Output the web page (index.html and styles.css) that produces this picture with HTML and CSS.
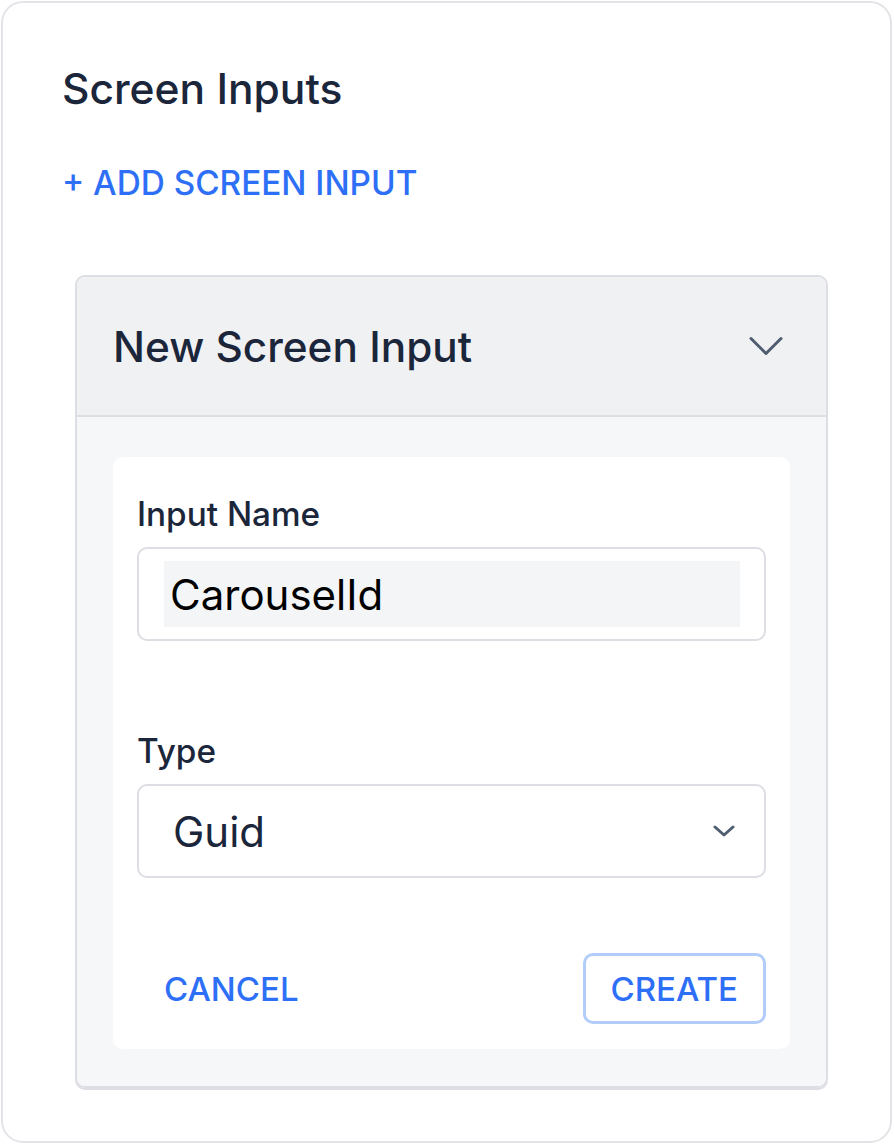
FILE: index.html
```html
<!DOCTYPE html>
<html lang="en">
<head>
<meta charset="utf-8">
<title>Screen Inputs</title>
<link rel="stylesheet" href="styles.css">
</head>
<body>
<section class="panel">
  <h2 class="panel-title">Screen Inputs</h2>
  <button class="link-btn" type="button">+ ADD SCREEN INPUT</button>

  <div class="accordion">
    <div class="accordion-header">
      <span class="accordion-title">New Screen Input</span>
      <svg class="accordion-chevron" width="48" height="48" viewBox="0 0 24 24" fill="none" stroke="currentColor" stroke-width="1.5" stroke-linecap="round" stroke-linejoin="round" aria-hidden="true">
        <path d="M19.5 8.25l-7.5 7.5-7.5-7.5"/>
      </svg>
    </div>
    <div class="accordion-body">
      <form class="form-card">
        <div class="field">
          <label class="field-label" for="name">Input Name</label>
          <div class="text-box">
            <input id="name" class="text-input" type="text" value="CarouselId">
          </div>
        </div>
        <div class="field">
          <label class="field-label">Type</label>
          <div class="select-box">
            <span class="select-value">Guid</span>
            <svg class="select-chevron" width="22" height="12" viewBox="0 0 22 12" fill="none" stroke="currentColor" stroke-width="3" stroke-linecap="round" stroke-linejoin="round" aria-hidden="true">
              <path d="M2 2l9 8 9-8"/>
            </svg>
          </div>
        </div>
        <div class="actions">
          <button class="btn btn-text" type="button">CANCEL</button>
          <button class="btn btn-outline" type="button">CREATE</button>
        </div>
      </form>
    </div>
  </div>
</section>
</body>
</html>
```

FILE: styles.css
```css
* {
  box-sizing: border-box;
}

html, body {
  margin: 0;
  padding: 0;
  background: #ffffff;
}

body {
  padding: 1px 0 0 1px;
  font-family: Inter, "Noto Sans", "Liberation Sans", sans-serif;
  color: #1b263b;
}

.panel {
  width: 891px;
  height: 1142px;
  border: 2px solid #e2e4e8;
  border-radius: 22px;
  padding: 60px 62px 0 59px;
}

.panel-title {
  margin: 0;
  font-size: 42.5px;
  line-height: 52px;
  font-weight: 500;
  color: #1b263b;
}

.link-btn {
  display: block;
  margin: 48px 0 0 0;
  padding: 0;
  border: 0;
  background: none;
  font-family: inherit;
  font-size: 33.3px;
  line-height: 40px;
  font-weight: 500;
  color: #2d6ff6;
  cursor: pointer;
}

.accordion {
  margin: 72px 0 0 13px;
  border: 2px solid #dcdee3;
  border-radius: 10px;
  overflow: hidden;
  box-shadow: 0 2px 0 #dcdee3;
}

.accordion-header {
  height: 140px;
  display: flex;
  align-items: center;
  justify-content: space-between;
  padding: 0 36px 0 36px;
  background: #f0f1f3;
  border-bottom: 2px solid #dcdee3;
}

.accordion-title {
  font-size: 42.3px;
  font-weight: 500;
  color: #1b263b;
}

.accordion-chevron {
  color: #4f5d70;
}

.accordion-body {
  background: #f6f7f9;
  padding: 40px 36px 37px 36px;
}

.form-card {
  background: #ffffff;
  border-radius: 10px;
  padding: 37px 24px 25px 24px;
  display: flex;
  flex-direction: column;
}

.field {
  display: flex;
  flex-direction: column;
  gap: 13px;
}

.field + .field {
  margin-top: 90px;
}

.field-label {
  font-size: 33.3px;
  line-height: 40px;
  font-weight: 500;
  color: #1b263b;
}

.text-box {
  height: 94px;
  border: 2px solid #dcdee3;
  border-radius: 10px;
  padding: 12px 24px 12px 25px;
  display: flex;
}

.text-input {
  flex: 1;
  min-width: 0;
  width: 100%;
  height: 66px;
  border: 0;
  outline: none;
  background: #f4f5f7;
  padding: 0 0 0 6px;
  font-family: inherit;
  font-size: 42px;
  color: #000000;
}

.select-box {
  height: 94px;
  border: 2px solid #dcdee3;
  border-radius: 10px;
  padding: 0 29px 0 34px;
  display: flex;
  align-items: center;
  justify-content: space-between;
}

.select-value {
  font-size: 42px;
  color: #1b263b;
}

.select-chevron {
  color: #4f5d70;
}

.actions {
  margin-top: 75px;
  display: flex;
  justify-content: space-between;
  align-items: center;
}

.btn {
  height: 71px;
  padding: 0 25px;
  border-radius: 10px;
  font-family: inherit;
  font-size: 33px;
  font-weight: 500;
  color: #2d6ff6;
  background: none;
  cursor: pointer;
}

.btn-text {
  border: 2px solid transparent;
}

.btn-outline {
  border: 3px solid #b3cdfb;
}
```
